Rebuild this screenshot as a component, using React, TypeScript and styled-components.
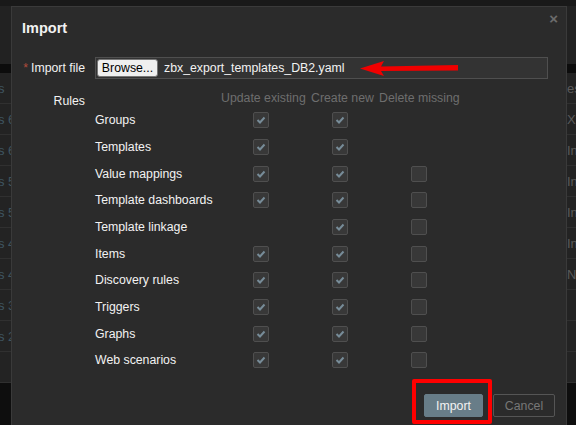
import React from "react";
import styled, { createGlobalStyle } from "styled-components";

const Global = createGlobalStyle`
  html, body { margin: 0; padding: 0; }
  body {
    width: 576px; height: 425px; overflow: hidden;
    background: #1f1f1f;
    font-family: "Liberation Sans", Arial, sans-serif;
    font-size: 12.3px;
  }
`;

const Page = styled.div`
  position: relative;
  width: 576px;
  height: 425px;
  overflow: hidden;
  display: flex;
  flex-direction: column;
`;

const TopBar = styled.div`
  height: 64px;
  background: #222222;
  border-top: 6px solid #191919;
  box-sizing: border-box;
`;

const DarkStrip = styled.div`
  height: 9px;
  background: #0c0c0c;
`;

const BgRow = styled.div`
  height: 31px;
  box-sizing: border-box;
  border-bottom: 1px solid #303030;
  background: #232323;
  display: flex;
  align-items: center;
  justify-content: space-between;
  font-size: 13px;
  color: #3f5560;
`;

const BgLeft = styled.span`
  margin-left: -2px;
  white-space: nowrap;
`;

const BgRight = styled.span`
  width: 9px;
  overflow: hidden;
  white-space: nowrap;
  color: #5a5a5a;
`;

const BgBottom = styled.div`
  flex: 1;
  background: #0e0e0e;
`;

const Dialog = styled.div`
  position: absolute;
  left: 11px;
  top: 6px;
  width: 556px;
  height: 424px;
  box-sizing: border-box;
  background: #2b2b2b;
  border: 1px solid #3a3a3a;
  display: flex;
  flex-direction: column;
`;

const Header = styled.div`
  padding: 13px 10px 0 10px;
  height: 16px;
  display: flex;
  align-items: center;
  justify-content: space-between;
`;

const Title = styled.h4`
  margin: 0;
  font-size: 14.5px;
  font-weight: bold;
  line-height: 16px;
  color: #f2f2f2;
`;

const Close = styled.span`
  position: relative;
  top: -10px;
  right: -2px;
  color: #6b6b6b;
  font-size: 15px;
  font-weight: bold;
  line-height: 1;
`;

const Body = styled.div`
  margin-top: 21px;
  padding: 0 10px;
  display: grid;
  grid-template-columns: 63px 1fr;
  column-gap: 10px;
  row-gap: 12px;
`;

const Label = styled.div<{ $pt?: number }>`
  text-align: right;
  color: #f2f2f2;
  line-height: 14px;
  padding-top: ${(p) => p.$pt ?? 0}px;
  white-space: nowrap;
`;

const LabelRow = styled(Label)`
  align-self: center;
`;

const Asterisk = styled.span`
  color: #b24b3c;
  margin-right: 3px;
`;

const FileField = styled.div`
  position: relative;
  width: 453px;
  height: 22px;
  box-sizing: border-box;
  background: #333333;
  border: 1px solid #4f4f4f;
  display: flex;
  align-items: center;
  padding-left: 1px;
  gap: 6px;
`;

const BrowseButton = styled.button`
  height: 18px;
  width: 61px;
  box-sizing: border-box;
  padding: 0;
  background: #efefef;
  border: 1px solid #767676;
  border-radius: 3px;
  font-family: "Liberation Sans", Arial, sans-serif;
  font-size: 12.3px;
  color: #000;
`;

const FileName = styled.span`
  color: #f2f2f2;
`;

const Arrow = styled.svg`
  position: absolute;
  left: 264px;
  top: 3px;
`;

const RulesTable = styled.div`
  display: grid;
  grid-template-columns: 124px 88px 68px 92px;
  grid-template-rows: 16px;
  grid-auto-rows: 26.67px;
  align-items: center;
`;

const HeadCell = styled.div<{ $pl: number }>`
  align-self: start;
  padding-left: ${(p) => p.$pl}px;
  color: #6e6e6e;
  line-height: 14px;
  white-space: nowrap;
`;

const RuleLabel = styled.div`
  color: #f2f2f2;
  white-space: nowrap;
`;

const CheckCell = styled.div<{ $ml: number }>`
  padding-left: ${(p) => p.$ml}px;
  display: flex;
`;

const Box = styled.span`
  width: 16px;
  height: 16px;
  box-sizing: border-box;
  background: #383838;
  border: 1px solid #4f4f4f;
  border-radius: 2px;
  display: flex;
  align-items: center;
  justify-content: center;
`;

const Footer = styled.div`
  margin-top: auto;
  padding: 0 11px 12px 0;
  display: flex;
  justify-content: flex-end;
  gap: 10px;
`;

const HighlightWrap = styled.div`
  position: relative;
  display: flex;
`;

const Highlight = styled.span`
  position: absolute;
  left: -12px;
  top: -15px;
  width: 80px;
  height: 45px;
  box-sizing: border-box;
  border: 4px solid #ff0000;
  border-radius: 2px;
`;

const Btn = styled.button<{ $primary?: boolean }>`
  height: 23px;
  box-sizing: border-box;
  padding: 0;
  font-family: "Liberation Sans", Arial, sans-serif;
  font-size: 12.3px;
  border-radius: 2px;
  width: ${(p) => (p.$primary ? 59 : 62)}px;
  background: ${(p) => (p.$primary ? "#687d88" : "transparent")};
  color: ${(p) => (p.$primary ? "#f2f2f2" : "#777777")};
  border: 1px solid ${(p) => (p.$primary ? "#687d88" : "#555555")};
`;

const Check = ({ on }: { on: boolean }) => (
  <Box>
    {on && (
      <svg width="12" height="12" viewBox="0 0 12 12">
        <polyline points="2.5,6 5,8.5 9.5,3.5" fill="none" stroke="#778c98" strokeWidth="2" />
      </svg>
    )}
  </Box>
);

type Rule = { name: string; u: boolean | null; c: boolean | null; d: boolean | null };

const rules: Rule[] = [
  { name: "Groups", u: true, c: true, d: null },
  { name: "Templates", u: true, c: true, d: null },
  { name: "Value mappings", u: true, c: true, d: false },
  { name: "Template dashboards", u: true, c: true, d: false },
  { name: "Template linkage", u: null, c: true, d: false },
  { name: "Items", u: true, c: true, d: false },
  { name: "Discovery rules", u: true, c: true, d: false },
  { name: "Triggers", u: true, c: true, d: false },
  { name: "Graphs", u: true, c: true, d: false },
  { name: "Web scenarios", u: true, c: true, d: false },
];

const bgRows = [
  ["s", "es"],
  ["s 6", "X("],
  ["s 6", "In"],
  ["s 5", "In"],
  ["s 5", "In"],
  ["s 4", "In"],
  ["s 4", "N"],
  ["s 3", ""],
  ["s 2", ""],
  ["", ""],
];

export default function App() {
  return (
    <>
      <Global />
      <Page>
        <TopBar />
        <DarkStrip />
        {bgRows.map(([l, r], i) => (
          <BgRow key={i}>
            <BgLeft>{l}</BgLeft>
            <BgRight>{r}</BgRight>
          </BgRow>
        ))}
        <BgBottom />

        <Dialog>
          <Header>
            <Title>Import</Title>
            <Close>×</Close>
          </Header>
          <Body>
            <LabelRow>
              <Asterisk>*</Asterisk>Import file
            </LabelRow>
            <FileField>
              <BrowseButton>Browse...</BrowseButton>
              <FileName>zbx_export_templates_DB2.yaml</FileName>
              <Arrow width="102" height="16" viewBox="0 0 102 16">
                <polygon points="0,7.5 24,0 21,5.5 98,4 98,9.5 21,10 24,15" fill="#f00000" />
              </Arrow>
            </FileField>

            <Label $pt={3}>Rules</Label>
            <RulesTable>
              <span />
              <HeadCell $pl={2}>Update existing</HeadCell>
              <HeadCell $pl={4}>Create new</HeadCell>
              <HeadCell $pl={4}>Delete missing</HeadCell>
              {rules.map((r) => (
                <React.Fragment key={r.name}>
                  <RuleLabel>{r.name}</RuleLabel>
                  <CheckCell $ml={34}>{r.u !== null && <Check on={r.u} />}</CheckCell>
                  <CheckCell $ml={25}>{r.c !== null && <Check on={r.c} />}</CheckCell>
                  <CheckCell $ml={36}>{r.d !== null && <Check on={r.d} />}</CheckCell>
                </React.Fragment>
              ))}
            </RulesTable>
          </Body>
          <Footer>
            <HighlightWrap>
              <Highlight />
              <Btn $primary>Import</Btn>
            </HighlightWrap>
            <Btn>Cancel</Btn>
          </Footer>
        </Dialog>
      </Page>
    </>
  );
}
